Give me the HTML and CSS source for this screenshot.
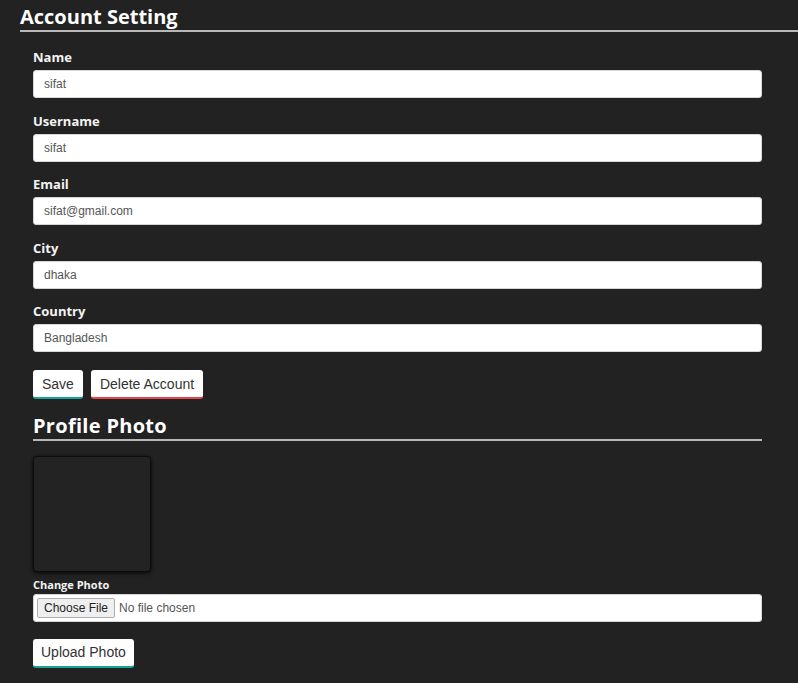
FILE: index.html
```html
<!DOCTYPE html>
<html lang="en">
<head>
<meta charset="utf-8">
<title>Account Setting</title>
<link rel="stylesheet" href="styles.css">
</head>
<body>
<div class="page">
  <h2 class="title">Account Setting</h2>
  <div class="content">
    <form class="form">
      <div class="group">
        <label class="label" for="name">Name</label>
        <input class="field" id="name" type="text" value="sifat">
      </div>
      <div class="group">
        <label class="label" for="username">Username</label>
        <input class="field" id="username" type="text" value="sifat">
      </div>
      <div class="group">
        <label class="label" for="email">Email</label>
        <input class="field" id="email" type="text" value="sifat@gmail.com">
      </div>
      <div class="group">
        <label class="label" for="city">City</label>
        <input class="field" id="city" type="text" value="dhaka">
      </div>
      <div class="group">
        <label class="label" for="country">Country</label>
        <input class="field" id="country" type="text" value="Bangladesh">
      </div>
      <div class="actions">
        <button type="button" class="btn btn-save">Save</button>
        <button type="button" class="btn btn-delete">Delete Account</button>
      </div>
    </form>

    <h3 class="subtitle">Profile Photo</h3>
    <div class="photo"></div>
    <label class="small-label" for="photo">Change Photo</label>
    <div class="file-wrap">
      <input class="file" id="photo" type="file">
    </div>
    <button type="button" class="btn btn-save btn-upload">Upload Photo</button>
  </div>
</div>
</body>
</html>
```

FILE: styles.css
```css
html, body {
  margin: 0;
  padding: 0;
  background: #222222;
}

body {
  font-family: "Open Sans", "Liberation Sans", sans-serif;
  color: #f2f2f2;
  overflow: hidden;
}

.page {
  padding-left: 20px;
}

.title {
  margin: 0;
  padding-top: 3px;
  font-size: 20px;
  line-height: 27px;
  font-weight: 700;
  color: #ffffff;
  border-bottom: 2px solid #b8b8b8;
}

.content {
  width: 729px;
  margin-left: 13px;
  padding-top: 16px;
}

.group {
  display: flex;
  flex-direction: column;
  margin-bottom: 13.5px;
}

.label {
  font-size: 13px;
  line-height: 18px;
  font-weight: 700;
  color: #f4f4f4;
  margin-bottom: 4px;
}

.field {
  box-sizing: border-box;
  height: 28px;
  width: 100%;
  padding: 0 10px;
  border: 1px solid #d6d6d6;
  border-radius: 3px;
  background: #ffffff;
  font-family: "Liberation Sans", Arial, sans-serif;
  font-size: 12px;
  color: #555555;
  outline: none;
}

.actions {
  display: flex;
  gap: 8px;
  padding-top: 4.5px;
}

.btn {
  box-sizing: border-box;
  height: 29px;
  padding: 0 9px;
  border: none;
  border-radius: 3px;
  background: #ffffff;
  font-family: "Liberation Sans", Arial, sans-serif;
  font-size: 14px;
  color: #333333;
  cursor: pointer;
}

.btn-save {
  border-bottom: 2px solid #1aa39a;
}

.btn-delete {
  border-bottom: 2px solid #e3474c;
}

.subtitle {
  margin: 12.5px 0 0 0;
  font-size: 20px;
  line-height: 27px;
  font-weight: 700;
  color: #ffffff;
  letter-spacing: 0.3px;
  border-bottom: 2px solid #b8b8b8;
}

.photo {
  width: 116px;
  height: 114px;
  margin-top: 15px;
  background: #232323;
  border: 1px solid #0c0c0c;
  border-radius: 4px;
  box-shadow: 0 1px 4px rgba(0, 0, 0, 0.9);
}

.small-label {
  display: block;
  margin-top: 5px;
  font-size: 11px;
  line-height: 15px;
  font-weight: 700;
  color: #f4f4f4;
}

.file-wrap {
  box-sizing: border-box;
  margin-top: 2px;
  height: 28px;
  padding: 0 3px;
  display: flex;
  align-items: center;
  background: #ffffff;
  border: 1px solid #d6d6d6;
  border-radius: 3px;
}

.file {
  font-family: "Liberation Sans", Arial, sans-serif;
  font-size: 12px;
  color: #555555;
}

.file::file-selector-button {
  font-family: "Liberation Sans", Arial, sans-serif;
  font-size: 12px;
  color: #222222;
  background: #efefef;
  border: 1px solid #adadad;
  border-radius: 2px;
  padding: 2px 6px;
  margin-right: 4px;
}

.btn-upload {
  margin-top: 17px;
  padding: 0 8px;
}
```
